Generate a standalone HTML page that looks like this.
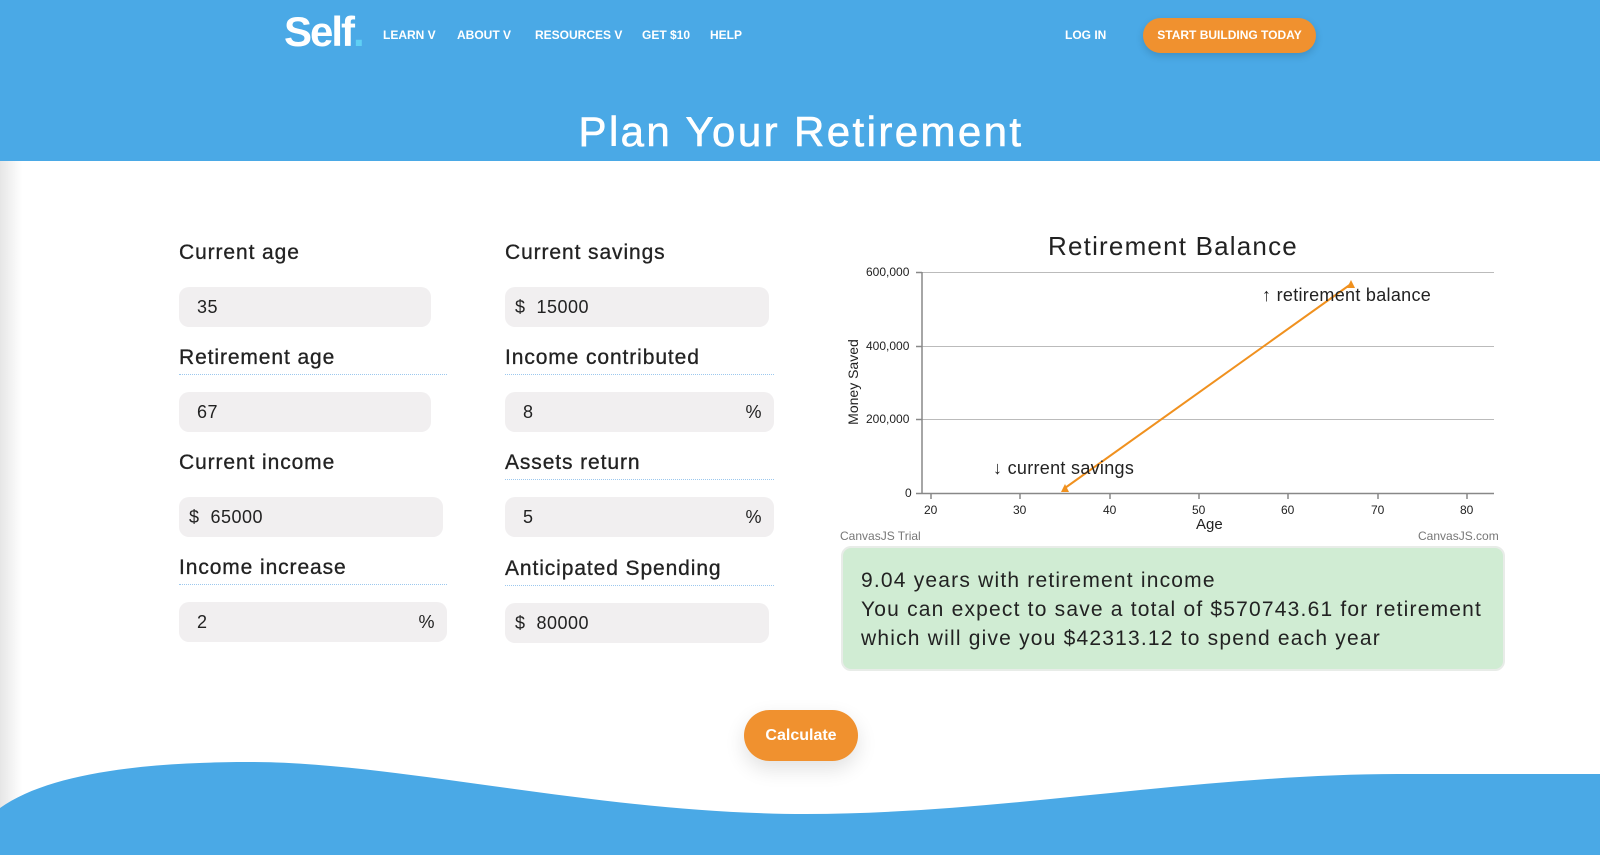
<!DOCTYPE html>
<html><head><meta charset="utf-8"><style>
*{margin:0;padding:0;box-sizing:border-box}
body{width:1600px;height:855px;overflow:hidden;position:relative;background:#fff;font-family:"Liberation Sans",sans-serif;color:#222}
.hdr{position:absolute;left:0;top:0;width:1600px;height:161px;background:#4aa9e6}
.shadow{position:absolute;left:0;top:161px;width:22px;height:694px;background:linear-gradient(90deg,#e6e6e6,#fff)}
.a{position:absolute;white-space:nowrap}
.nav{color:#fff;font-weight:bold;font-size:12px;top:28px}
.logo{left:284px;top:8px;color:#fff;font-weight:bold;font-size:42px;letter-spacing:-2px}
.btn{left:1143px;top:18px;width:173px;height:35px;border-radius:18px;background:#f0912f;color:#fff;font-weight:bold;font-size:12px;text-align:center;line-height:35px;box-shadow:0 3px 8px rgba(0,0,0,.15)}
h1{position:absolute;left:0;width:1602px;text-align:center;top:108px;color:#fff;font-size:42px;font-weight:normal;letter-spacing:2.4px;-webkit-text-stroke:0.6px #fff}
.lbl{font-size:21px;color:#222;letter-spacing:0.9px;-webkit-text-stroke:0.3px #222}
.ul{position:absolute;height:0;border-top:1px dotted #9cc8ee}
.in{position:absolute;height:40px;background:#f1eff0;border-radius:10px;font-size:18px;line-height:40px;padding-left:18px;color:#222;letter-spacing:0.5px}
.in .p{position:absolute;right:12px;top:0}
.in.d{padding-left:10px}
.tk{font-size:12px;color:#222;position:absolute}
.green{position:absolute;left:841px;top:546px;width:664px;height:125px;background:#d0ecd3;border:2px solid #e8ece8;border-radius:10px;padding:18px 0 0 18px;font-size:21px;line-height:29px;color:#222;letter-spacing:1.2px}
.calc{left:744px;top:710px;width:114px;height:51px;border-radius:26px;background:#f0912f;color:#fff;font-size:16px;font-weight:bold;text-align:center;line-height:51px;box-shadow:0 8px 20px rgba(0,0,0,.12)}
</style></head><body>
<div class="hdr"></div>
<div class="shadow"></div>
<div class="a logo">Self<span style="color:#5fd0f5">.</span></div>
<div class="a nav" style="left:383px">LEARN V</div>
<div class="a nav" style="left:457px">ABOUT V</div>
<div class="a nav" style="left:535px">RESOURCES V</div>
<div class="a nav" style="left:642px">GET $10</div>
<div class="a nav" style="left:710px">HELP</div>
<div class="a nav" style="left:1065px">LOG IN</div>
<div class="a btn">START BUILDING TODAY</div>
<h1>Plan Your Retirement</h1>

<div class="a lbl" style="left:179px;top:241px">Current age</div>
<div class="in" style="left:179px;top:287px;width:252px">35</div>
<div class="a lbl" style="left:179px;top:346px">Retirement age</div>
<div class="ul" style="left:179px;top:374px;width:268px"></div>
<div class="in" style="left:179px;top:392px;width:252px">67</div>
<div class="a lbl" style="left:179px;top:451px">Current income</div>
<div class="in d" style="left:179px;top:497px;width:264px">$&nbsp; 65000</div>
<div class="a lbl" style="left:179px;top:556px">Income increase</div>
<div class="ul" style="left:179px;top:584px;width:268px"></div>
<div class="in" style="left:179px;top:602px;width:268px">2<span class="p">%</span></div>

<div class="a lbl" style="left:505px;top:241px">Current savings</div>
<div class="in d" style="left:505px;top:287px;width:264px">$&nbsp; 15000</div>
<div class="a lbl" style="left:505px;top:346px">Income contributed</div>
<div class="ul" style="left:505px;top:374px;width:269px"></div>
<div class="in" style="left:505px;top:392px;width:269px">8<span class="p">%</span></div>
<div class="a lbl" style="left:505px;top:451px">Assets return</div>
<div class="ul" style="left:505px;top:479px;width:269px"></div>
<div class="in" style="left:505px;top:497px;width:269px">5<span class="p">%</span></div>
<div class="a lbl" style="left:505px;top:557px">Anticipated Spending</div>
<div class="ul" style="left:505px;top:585px;width:269px"></div>
<div class="in d" style="left:505px;top:603px;width:264px">$&nbsp; 80000</div>

<svg class="a" style="left:0;top:0" width="1600" height="855">
<g stroke="#bbb" stroke-width="1">
<line x1="922" y1="272.5" x2="1494" y2="272.5"/>
<line x1="922" y1="346.5" x2="1494" y2="346.5"/>
<line x1="922" y1="419.5" x2="1494" y2="419.5"/>
</g>
<g stroke="#888" stroke-width="1.5">
<line x1="922" y1="272" x2="922" y2="494"/>
<line x1="916" y1="493.5" x2="1494" y2="493.5"/>
<line x1="916" y1="272.5" x2="922" y2="272.5"/><line x1="916" y1="346.5" x2="922" y2="346.5"/><line x1="916" y1="419.5" x2="922" y2="419.5"/>
<line x1="931" y1="494" x2="931" y2="499"/><line x1="1020" y1="494" x2="1020" y2="499"/><line x1="1110" y1="494" x2="1110" y2="499"/><line x1="1199" y1="494" x2="1199" y2="499"/><line x1="1288" y1="494" x2="1288" y2="499"/><line x1="1378" y1="494" x2="1378" y2="499"/><line x1="1467" y1="494" x2="1467" y2="499"/>
</g>
<line x1="1065" y1="488" x2="1351" y2="284" stroke="#f0911f" stroke-width="2"/>
<polygon points="1065,484 1061,492 1069,492" fill="#f0911f"/>
<polygon points="1351,280 1347,288 1355,288" fill="#f0911f"/>
<path d="M0,808 C50,772 150,762 250,762 C400,762 600,814 806,814 C1000,814 1200,774 1400,774 L1600,774 L1600,855 L0,855 Z" fill="#4aa9e6"/>
</svg>
<div class="a" style="left:0;width:2346px;text-align:center;top:231px;font-size:26px;letter-spacing:1.2px;color:#222">Retirement Balance</div>
<div class="tk" style="left:866px;top:265px">600,000</div>
<div class="tk" style="left:866px;top:339px">400,000</div>
<div class="tk" style="left:866px;top:412px">200,000</div>
<div class="tk" style="left:905px;top:486px">0</div>
<div class="tk" style="left:924px;top:503px">20</div>
<div class="tk" style="left:1013px;top:503px">30</div>
<div class="tk" style="left:1103px;top:503px">40</div>
<div class="tk" style="left:1192px;top:503px">50</div>
<div class="tk" style="left:1281px;top:503px">60</div>
<div class="tk" style="left:1371px;top:503px">70</div>
<div class="tk" style="left:1460px;top:503px">80</div>
<div class="a" style="left:1196px;top:516px;font-size:15px">Age</div>
<div class="a" style="left:808px;top:374px;font-size:14px;transform:rotate(-90deg);width:90px;text-align:center">Money Saved</div>
<div class="a" style="left:1262px;top:285px;font-size:18px;letter-spacing:0.3px">↑ retirement balance</div>
<div class="a" style="left:993px;top:458px;font-size:18px;letter-spacing:0.3px">↓ current savings</div>
<div class="a" style="left:840px;top:529px;font-size:12px;color:#777">CanvasJS Trial</div>
<div class="a" style="left:1418px;top:529px;font-size:12px;color:#777">CanvasJS.com</div>
<div class="green">9.04 years with retirement income<br>You can expect to save a total of $570743.61 for retirement<br>which will give you $42313.12 to spend each year</div>
<div class="a calc">Calculate</div>
</body></html>
